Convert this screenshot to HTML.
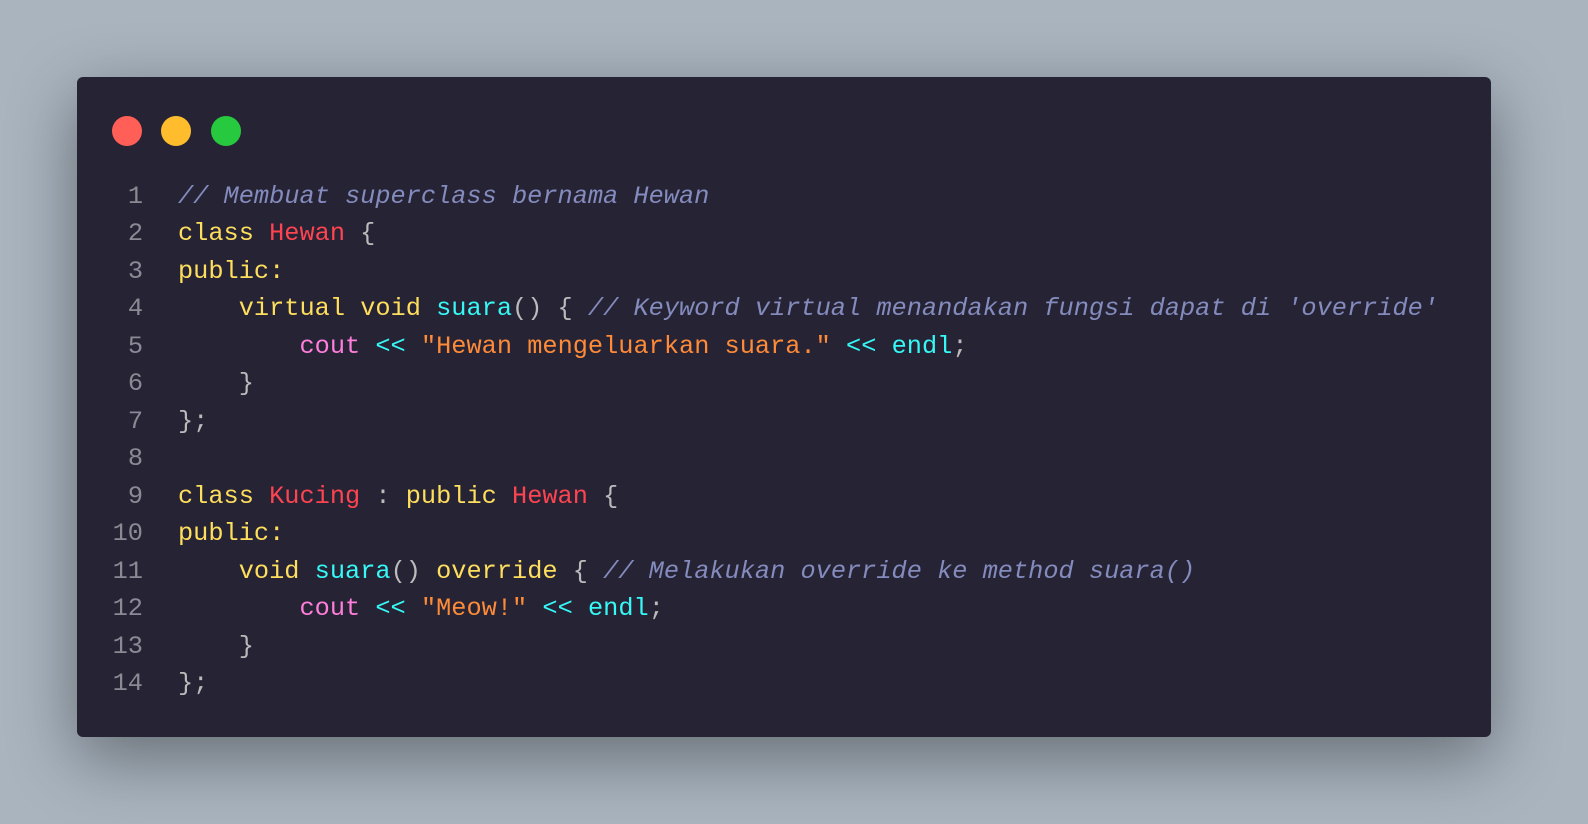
<!DOCTYPE html>
<html><head><meta charset="utf-8"><style>
html,body{margin:0;padding:0;width:1588px;height:824px;overflow:hidden;background:#a9b4bf;}
.win{position:absolute;left:77px;top:77px;width:1414px;height:660px;background:#262335;border-radius:6px;box-shadow:0 20px 68px rgba(0,0,0,0.4);}
.dot{position:absolute;top:39px;width:30px;height:30px;border-radius:50%;}
pre{position:absolute;left:0;top:100.5px;margin:0;font-family:"Liberation Mono",monospace;font-size:25.3px;line-height:37.5px;color:#bbbbbb;}
.ln{display:inline-block;width:66px;text-align:right;color:#8b8a94;margin-right:35px;}
.c{color:#848bbd;font-style:italic}.k{color:#fede5d}.t{color:#fe4450}.f{color:#36f9f6}.p{color:#ff7edb}.s{color:#ff8b39}
</style></head><body>
<div class="win">
<div class="dot" style="left:35px;background:#ff5f56"></div>
<div class="dot" style="left:84px;background:#ffbd2e"></div>
<div class="dot" style="left:134px;background:#27c93f"></div>
<pre><span class="ln">1</span><span class="c">// Membuat superclass bernama Hewan</span>
<span class="ln">2</span><span class="k">class</span> <span class="t">Hewan</span> {
<span class="ln">3</span><span class="k">public:</span>
<span class="ln">4</span>    <span class="k">virtual</span> <span class="k">void</span> <span class="f">suara</span>() { <span class="c">// Keyword virtual menandakan fungsi dapat di 'override'</span>
<span class="ln">5</span>        <span class="p">cout</span> <span class="f">&lt;&lt;</span> <span class="s">"Hewan mengeluarkan suara."</span> <span class="f">&lt;&lt;</span> <span class="f">endl</span>;
<span class="ln">6</span>    }
<span class="ln">7</span>};
<span class="ln">8</span>
<span class="ln">9</span><span class="k">class</span> <span class="t">Kucing</span> : <span class="k">public</span> <span class="t">Hewan</span> {
<span class="ln">10</span><span class="k">public:</span>
<span class="ln">11</span>    <span class="k">void</span> <span class="f">suara</span>() <span class="k">override</span> { <span class="c">// Melakukan override ke method suara()</span>
<span class="ln">12</span>        <span class="p">cout</span> <span class="f">&lt;&lt;</span> <span class="s">"Meow!"</span> <span class="f">&lt;&lt;</span> <span class="f">endl</span>;
<span class="ln">13</span>    }
<span class="ln">14</span>};</pre>
</div>
</body></html>
